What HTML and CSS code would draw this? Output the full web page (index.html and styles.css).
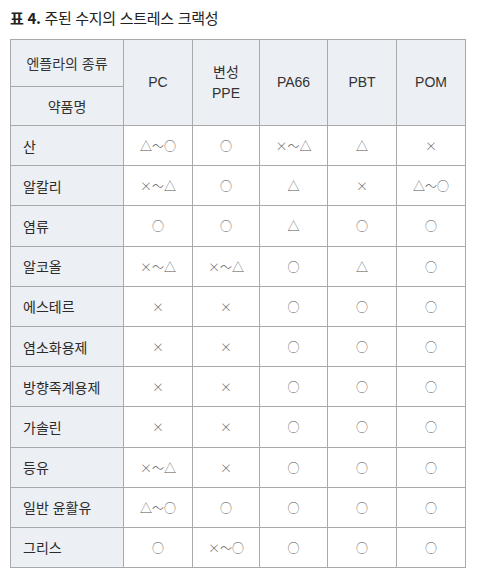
FILE: index.html
```html
<!DOCTYPE html>
<html lang="ko">
<head>
<meta charset="utf-8">
<link rel="stylesheet" href="styles.css">
</head>
<body>
<div class="title"><b>표 4.</b> 주된 수지의 스트레스 크랙성</div>
<table class="tbl">
  <colgroup>
    <col class="c0"><col class="c1"><col class="c2"><col class="c3"><col class="c4"><col class="c5">
  </colgroup>
  <thead>
    <tr class="h1">
      <th class="head">엔플라의 종류</th>
      <th rowspan="2">PC</th>
      <th rowspan="2">변성<br>PPE</th>
      <th rowspan="2">PA66</th>
      <th rowspan="2">PBT</th>
      <th rowspan="2">POM</th>
    </tr>
    <tr class="h2">
      <th class="head">약품명</th>
    </tr>
  </thead>
  <tbody>
    <tr><th>산</th><td>△～○</td><td>○</td><td>×～△</td><td>△</td><td>×</td></tr>
    <tr><th>알칼리</th><td>×～△</td><td>○</td><td>△</td><td>×</td><td>△～○</td></tr>
    <tr><th>염류</th><td>○</td><td>○</td><td>△</td><td>○</td><td>○</td></tr>
    <tr><th>알코올</th><td>×～△</td><td>×～△</td><td>○</td><td>△</td><td>○</td></tr>
    <tr><th>에스테르</th><td>×</td><td>×</td><td>○</td><td>○</td><td>○</td></tr>
    <tr><th>염소화용제</th><td>×</td><td>×</td><td>○</td><td>○</td><td>○</td></tr>
    <tr><th>방향족계용제</th><td>×</td><td>×</td><td>○</td><td>○</td><td>○</td></tr>
    <tr><th>가솔린</th><td>×</td><td>×</td><td>○</td><td>○</td><td>○</td></tr>
    <tr><th>등유</th><td>×～△</td><td>×</td><td>○</td><td>○</td><td>○</td></tr>
    <tr><th>일반 윤활유</th><td>△～○</td><td>○</td><td>○</td><td>○</td><td>○</td></tr>
    <tr><th>그리스</th><td>○</td><td>×～○</td><td>○</td><td>○</td><td>○</td></tr>
  </tbody>
</table>
</body>
</html>
```
FILE: styles.css
```css
html, body {
  margin: 0;
  padding: 0;
  background: #ffffff;
}
body {
  font-family: "Noto Sans CJK KR", "Noto Sans", sans-serif;
  color: #2b2b2b;
  padding: 8px 0 0 10px;
}
.title {
  font-size: 15px;
  line-height: 20px;
  letter-spacing: -0.3px;
  color: #222;
  margin-bottom: 11px;
}
.title b {
  font-weight: 700;
}
.tbl {
  border-collapse: collapse;
  table-layout: fixed;
  width: 455px;
  font-size: 14px;
}
.c0 { width: 113px; }
.c1 { width: 69px; }
.c2 { width: 67px; }
.c3 { width: 68px; }
.c4 { width: 69px; }
.c5 { width: 69px; }
.tbl th, .tbl td {
  border: 1px solid #a9a9a9;
  padding: 0;
  font-weight: 400;
  text-align: center;
  vertical-align: middle;
}
.tbl thead th {
  background: #eceff3;
  font-family: "Liberation Sans", "Noto Sans CJK KR", sans-serif;
  font-size: 14px;
  line-height: 21px;
  color: #333;
}
.tbl thead th.head {
  font-family: "Noto Sans CJK KR", sans-serif;
}
.h1 { height: 47px; }
.h2 { height: 39px; }
.tbl tbody tr { height: 40.2px; }
.tbl tbody th {
  background: #eceff3;
  text-align: left;
  padding-left: 12px;
  color: #2b2b2b;
}
.tbl tbody td {
  font-family: "Noto Sans CJK KR", sans-serif;
  font-size: 12px;
  font-weight: 300;
  color: #555;
  letter-spacing: 0;
}
```
